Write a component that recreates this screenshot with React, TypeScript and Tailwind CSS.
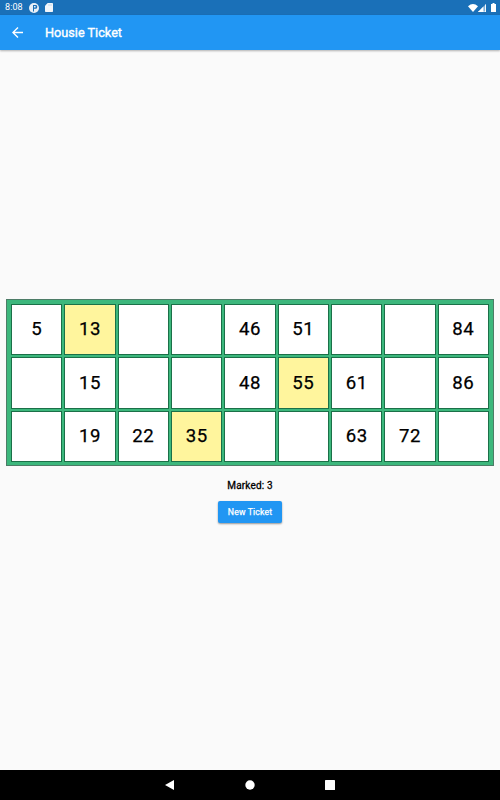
import { useState } from 'react';

const TICKET: (number | null)[][] = [
  [5, 13, null, null, 46, 51, null, null, 84],
  [null, 15, null, null, 48, 55, 61, null, 86],
  [null, 19, 22, 35, null, null, 63, 72, null],
];

function StatusBar() {
  return (
    <div className="flex h-[15px] items-center justify-between bg-[#1a70b8] pl-[5px] pr-[4px] text-white">
      <div className="flex items-center">
        <span className="w-6 text-[9px] leading-none tracking-[0.1px]">8:08</span>
        <svg viewBox="0 0 10 10" className="h-[10px] w-[10px]">
          <circle cx="5" cy="5" r="5" fill="#e8f0f7" />
          <path d="M4 2h3q1.3 0 1.3 1.8T7 5.8H5v2.8H4z" fill="#1a70b8" />
          <path d="M5 3h1.6v1.6H5z" fill="#e8f0f7" />
        </svg>
        <svg viewBox="0 0 8 9" className="ml-[6px] h-[9px] w-[8px]">
          <path d="M2.7 0H7.3q.7 0 .7.7V8.3q0 .7-.7.7H.7Q0 9 0 8.3V2.7z" fill="#f1f6fb" />
          <path d="M3 1.5h4v1H3z" fill="#1a70b8" fillOpacity=".2" />
        </svg>
      </div>
      <div className="flex items-center">
        <svg viewBox="0 0 10 8" className="h-[8px] w-[10px]">
          <path d="M0 2.2Q5-2.2 10 2.2L5 8z" fill="#fff" />
        </svg>
        <svg viewBox="0 0 8 8" className="h-[8px] w-[8px]">
          <path d="M8 0v8H0z" fill="#fff" fillOpacity=".45" />
          <path d="M5.4 2.6V8H0zM7.1.9L8 0v8H7.1z" fill="#fff" />
          <path d="M0 8v-.7h8V8z" fill="#fff" fillOpacity=".6" />
        </svg>
        <svg viewBox="0 0 5 9" className="ml-[5px] h-[9px] w-[5px]">
          <path d="M1.5 0h2v.9H5V9H0V.9h1.5z" fill="#fff" />
        </svg>
      </div>
    </div>
  );
}

function AppBar() {
  return (
    <header className="relative flex h-[35px] items-center bg-[#2196f3] pl-3 text-white shadow-[0_1px_2px_rgba(0,0,0,0.3)]">
      <button aria-label="Back" className="h-[11px] w-[11px]">
        <svg viewBox="4 4 16 16" className="h-full w-full" fill="currentColor">
          <path d="M20 11H7.83l5.59-5.59L12 4l-8 8 8 8 1.41-1.41L7.83 13H20v-2z" />
        </svg>
      </button>
      <h1 className="ml-[22px] pt-px text-[12.7px] font-normal leading-none [-webkit-text-stroke:0.35px]">Housie Ticket</h1>
    </header>
  );
}

function Cell({ value, marked, onToggle }: { value: number | null; marked: boolean; onToggle: (n: number) => void }) {
  return (
    <div className="p-px">
      <button
        onClick={() => value !== null && onToggle(value)}
        className={`flex h-full w-full items-center justify-center border border-[#1b7048] text-[18.6px] font-normal leading-none tracking-[0.5px] text-black [-webkit-text-stroke:0.25px] ${
          marked ? 'bg-[#fff59d]' : 'bg-white'
        }`}
      >
        {value}
      </button>
    </div>
  );
}

function NavBar() {
  return (
    <nav className="flex h-[30px] items-center justify-center bg-black">
      <svg viewBox="0 0 180 12" className="h-[12px] w-[180px]" fill="#fff">
        <path d="M14 1v10L5 6z" />
        <circle cx="90" cy="6" r="4.7" />
        <rect x="165" y="1" width="10" height="10" rx=".6" />
      </svg>
    </nav>
  );
}

export default function App() {
  const [marked, setMarked] = useState<number[]>([13, 55, 35]);

  const toggle = (n: number) => {
    setMarked((m) => (m.includes(n) ? m.filter((x) => x !== n) : [...m, n]));
  };

  return (
    <div className="flex h-[800px] w-[500px] flex-col bg-[#fafafa] font-[Roboto,sans-serif]">
      <StatusBar />
      <AppBar />
      <main className="flex flex-1 flex-col items-center pt-[249px]">
        <div className="h-[167px] w-[488px] border border-[#4d7c67] bg-[#3cb77c] p-[3px]">
          <div className="grid h-[160px] w-[480px] grid-cols-9 grid-rows-3">
            {TICKET.flat().map((value, i) => (
              <Cell key={i} value={value} marked={value !== null && marked.includes(value)} onToggle={toggle} />
            ))}
          </div>
        </div>
        <p className="mt-[14px] text-[10px] font-normal leading-[12px] tracking-[0.15px] text-black [-webkit-text-stroke:0.3px]">
          Marked: {marked.length}
        </p>
        <button
          onClick={() => setMarked([])}
          className="mt-[9px] h-[22px] w-[64px] rounded-[2px] bg-[#2196f3] text-[8.7px] font-normal leading-none tracking-[0.15px] text-white shadow-[0_1px_2px_rgba(0,0,0,0.4)] [-webkit-text-stroke:0.25px]"
        >
          New Ticket
        </button>
      </main>
      <NavBar />
    </div>
  );
}
